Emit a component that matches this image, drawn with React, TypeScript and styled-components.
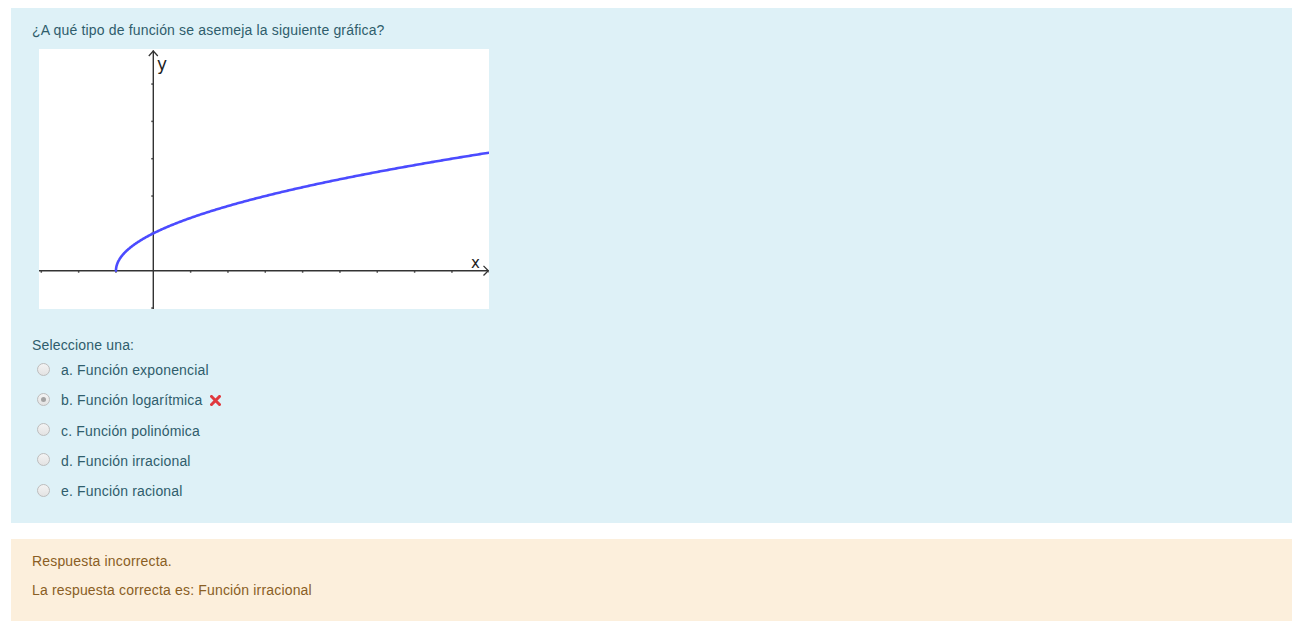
import React from "react";
import styled, { createGlobalStyle } from "styled-components";

const GlobalStyle = createGlobalStyle`
  html, body {
    margin: 0;
    padding: 0;
    background: #fff;
  }
  body {
    font-family: "Liberation Sans", Arial, sans-serif;
    font-size: 14px;
    letter-spacing: 0.17px;
  }
`;

const OPTIONS = [
  { key: "a", label: "Función exponencial", checked: false, wrong: false },
  { key: "b", label: "Función logarítmica", checked: true, wrong: true },
  { key: "c", label: "Función polinómica", checked: false, wrong: false },
  { key: "d", label: "Función irracional", checked: false, wrong: false },
  { key: "e", label: "Función racional", checked: false, wrong: false },
];

// graph geometry (image px)
const W = 450;
const H = 260;
const OX = 114.3;
const OY = 221.7;
const U = 37.33;

const curvePath = () => {
  const pts: string[] = [];
  for (let i = 0; i <= 400; i++) {
    const t = i / 400;
    // dense sampling near the start where slope is vertical
    const x = -1 + 10.1 * t * t;
    const y = Math.sqrt(x + 1);
    pts.push(`${(OX + x * U).toFixed(2)},${(OY - y * U).toFixed(2)}`);
  }
  return "M" + pts.join(" L");
};

const Graph = () => {
  const xTicks = [];
  for (let k = -3; k <= 9; k++) {
    if (k === 0) continue;
    const x = OX + k * U;
    xTicks.push(<line key={k} x1={x} y1={OY} x2={x} y2={OY + 2} stroke="#444" strokeWidth={1.5} />);
  }
  const yTicks = [];
  for (let k = -1; k <= 5; k++) {
    if (k === 0) continue;
    const y = OY - k * U;
    yTicks.push(<line key={k} x1={OX - 2} y1={y} x2={OX} y2={y} stroke="#444" strokeWidth={1.5} />);
  }
  return (
    <svg width={W} height={H} viewBox={`0 0 ${W} ${H}`}>
      <rect width={W} height={H} fill="#fff" />
      <line x1={0} y1={OY} x2={W - 0.5} y2={OY} stroke="#333" strokeWidth={1.4} />
      <line x1={OX} y1={1.5} x2={OX} y2={H} stroke="#333" strokeWidth={1.4} />
      <polyline points={`${OX - 4.5},${7} ${OX},${2} ${OX + 4.5},${7}`} fill="none" stroke="#333" strokeWidth={1.3} />
      <polyline points={`${W - 5.5},${OY - 4.8} ${W - 0.7},${OY} ${W - 5.5},${OY + 4.8}`} fill="none" stroke="#333" strokeWidth={1.3} />
      {xTicks}
      {yTicks}
      <text x={118} y={21} fontSize={17} fontFamily="'DejaVu Sans', sans-serif" fill="#222">y</text>
      <text x={432} y={218.5} fontSize={15} fontFamily="'DejaVu Sans', sans-serif" fill="#222">x</text>
      <path d={curvePath()} fill="none" stroke="#4b4bff" strokeWidth={2.6} strokeLinecap="round" />
    </svg>
  );
};

const CrossIcon = () => (
  <svg width="11" height="11" viewBox="0 0 11 11">
    <path d="M1.5 1.5 L9.5 9.5 M9.5 1.5 L1.5 9.5" stroke="#e0393e" strokeWidth={3} strokeLinecap="square" />
  </svg>
);

export default function App() {
  return (
    <Page>
      <GlobalStyle />
      <Formulation>
        <QuestionText>¿A qué tipo de función se asemeja la siguiente gráfica?</QuestionText>
        <GraphWrap>
          <Graph />
        </GraphWrap>
        <Prompt>Seleccione una:</Prompt>
        <Answers>
          {OPTIONS.map((o) => (
            <AnswerRow key={o.key}>
              <Radio $checked={o.checked} />
              <AnswerLabel>
                {o.key}. {o.label}
              </AnswerLabel>
              {o.wrong && (
                <IconSlot>
                  <CrossIcon />
                </IconSlot>
              )}
            </AnswerRow>
          ))}
        </Answers>
      </Formulation>
      <Outcome>
        <Feedback $gap>Respuesta incorrecta.</Feedback>
        <Feedback>La respuesta correcta es: Función irracional</Feedback>
      </Outcome>
    </Page>
  );
}

const Page = styled.div`
  padding: 8px 3px 4px 11px;
  display: flex;
  flex-direction: column;
  gap: 16px;
`;

const Formulation = styled.div`
  background: #def1f7;
  color: #2f5d6c;
  padding: 12px 21px 17px;
`;

const QuestionText = styled.div`
  line-height: 20px;
`;

const GraphWrap = styled.div`
  margin: 9px 0 0 7px;
  width: 450px;
  height: 260px;
  svg {
    display: block;
  }
`;

const Prompt = styled.div`
  margin-top: 26px;
  line-height: 20px;
`;

const Answers = styled.div`
  display: flex;
  flex-direction: column;
`;

const AnswerRow = styled.div`
  display: flex;
  align-items: center;
  height: 30.25px;
  padding-left: 5px;
`;

const Radio = styled.span<{ $checked?: boolean }>`
  position: relative;
  width: 13px;
  height: 13px;
  box-sizing: border-box;
  border-radius: 50%;
  border: 1px solid #bdbdbd;
  background: linear-gradient(#f3f3f3, #e3e3e3);
  margin-right: 11px;
  margin-top: -2px;
  flex: none;
  &::after {
    content: "";
    display: ${(p) => (p.$checked ? "block" : "none")};
    position: absolute;
    left: 3px;
    top: 3px;
    width: 5px;
    height: 5px;
    border-radius: 50%;
    background: #a3a3a3;
  }
`;

const AnswerLabel = styled.span`
  line-height: 20px;
`;

const IconSlot = styled.span`
  display: inline-flex;
  margin-left: 7px;
  margin-top: 1px;
`;

const Outcome = styled.div`
  background: #fcefdc;
  color: #8a5e24;
  padding: 12px 21px 21px;
`;

const Feedback = styled.div<{ $gap?: boolean }>`
  line-height: 20px;
  margin-bottom: ${(p) => (p.$gap ? "9px" : "0")};
`;
